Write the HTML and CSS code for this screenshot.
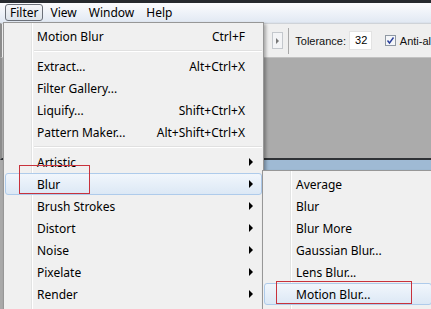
FILE: index.html
```html
<!DOCTYPE html>
<html lang="en">
<head>
  <meta charset="UTF-8">
  <meta name="viewport" content="width=device-width, initial-scale=1.0">
  <title>Filter menu</title>
  <link rel="stylesheet" href="styles.css">
</head>
<body>
  <div class="app">
    <div class="topline"></div>
    <nav class="menubar">
      <span class="menubar-item active">Filter</span>
      <span class="menubar-item">View</span>
      <span class="menubar-item">Window</span>
      <span class="menubar-item">Help</span>
    </nav>
    <div class="options">
      <span class="tb-btn"><span class="tb-arrow"></span></span>
      <span class="tb-sep"></span>
      <span class="tb-label">Tolerance:</span>
      <span class="tb-input">32</span>
      <span class="tb-check">
        <svg width="11" height="11" viewBox="0 0 11 11"><rect x="0.5" y="0.5" width="10" height="10" fill="#f4f6f9" stroke="#8f98a3"/><path d="M2.5 5.5 L4.5 8 L8.5 2.5" fill="none" stroke="#2a3f9a" stroke-width="1.4"/></svg>
      </span>
      <span class="tb-label">Anti-al</span>
    </div>
    <div class="canvas"></div>
    <div class="doc"></div>
  </div>

  <div class="menu main-menu">
    <div class="menu-item"><span>Motion Blur</span><span class="shortcut">Ctrl+F</span></div>
    <div class="menu-sep"></div>
    <div class="menu-item"><span>Extract...</span><span class="shortcut">Alt+Ctrl+X</span></div>
    <div class="menu-item"><span>Filter Gallery...</span></div>
    <div class="menu-item"><span>Liquify...</span><span class="shortcut">Shift+Ctrl+X</span></div>
    <div class="menu-item"><span>Pattern Maker...</span><span class="shortcut">Alt+Shift+Ctrl+X</span></div>
    <div class="menu-sep"></div>
    <div class="menu-item"><span>Artistic</span><span class="arrow"></span></div>
    <div class="menu-item hover"><span>Blur</span><span class="arrow"></span></div>
    <div class="menu-item"><span>Brush Strokes</span><span class="arrow"></span></div>
    <div class="menu-item"><span>Distort</span><span class="arrow"></span></div>
    <div class="menu-item"><span>Noise</span><span class="arrow"></span></div>
    <div class="menu-item"><span>Pixelate</span><span class="arrow"></span></div>
    <div class="menu-item"><span>Render</span><span class="arrow"></span></div>
  </div>

  <div class="menu sub-menu">
    <div class="menu-item"><span>Average</span></div>
    <div class="menu-item"><span>Blur</span></div>
    <div class="menu-item"><span>Blur More</span></div>
    <div class="menu-item"><span>Gaussian Blur...</span></div>
    <div class="menu-item"><span>Lens Blur...</span></div>
    <div class="menu-item hover"><span>Motion Blur...</span></div>
  </div>

  <div class="mark mark-blur"></div>
  <div class="mark mark-motion"></div>
</body>
</html>
```

FILE: styles.css
```css
body{
  margin: 0;
  width: 431px;
  height: 309px;
  overflow: hidden;
  position: relative;
  font-family: "Noto Sans", "Open Sans", sans-serif;
  font-size: 12px;
  color: #000;
}

.app{
  display: flex;
  flex-direction: column;
  height: 309px;
  background: #a9a9a9;
}

.topline{
  height: 3px;
  background: #262a2f;
}

.menubar{
  height: 19px;
  display: flex;
  align-items: center;
  gap: 2px;
  padding-left: 5px;
  background: linear-gradient(#fbfcfe, #e2e9f3);
  border-bottom: 1px solid #dbe2ec;
}

.menubar-item{
  height: 15px;
  line-height: 15px;
  padding: 0 4px;
  border: 1px solid transparent;
  border-radius: 3px;
}

.menubar-item.active{
  border-color: #6b7079;
  background: linear-gradient(#f4f6f9, #dde3ea);
}

.options{
  height: 33px;
  display: flex;
  align-items: center;
  padding-left: 270px;
  background: #efefef;
  border-top: 1px solid #cfd3d8;
  border-bottom: 1px solid #c2c2c2;
  border-left: 2px solid #8c8c8c;
  font-family: "Liberation Sans", Arial, sans-serif;
  font-size: 11px;
  white-space: nowrap;
  overflow: hidden;
}

.tb-btn{
  width: 12px;
  height: 15px;
  border: 1px solid #c4c8cd;
  background: #f3f4f6;
  display: flex;
  align-items: center;
  justify-content: center;
}

.tb-arrow{
  border-left: 3px solid #777;
  border-top: 3px solid transparent;
  border-bottom: 3px solid transparent;
}

.tb-sep{
  width: 1px;
  height: 26px;
  margin: 0 6px 0 5px;
  background: #a8a8a8;
}

.tb-label{
  color: #111;
}

.tb-input{
  width: 20px;
  height: 17px;
  line-height: 17px;
  margin: 0 13px 0 3px;
  padding-left: 5px;
  background: #fff;
  border: 1px solid #e3e3e3;
}

.tb-check{
  display: flex;
  margin-right: 4px;
}

.canvas{
  height: 100px;
  background: #ababab;
  border-left: 2px solid #8c8c8c;
  border-bottom: 2px solid #2f3236;
}

.doc{
  flex: 1;
  margin-left: 20px;
  background: #9fbad4;
}

.menu{
  position: absolute;
  box-sizing: border-box;
  padding: 2px 1px;
  background: #f0f0f0;
  border: 1px solid #979797;
  box-shadow: 2px 2px 3px rgba(0,0,0,.3);
}

.menu::before{
  content: "";
  position: absolute;
  top: 0;
  bottom: 0;
  left: 27px;
  width: 1px;
  background: #e2e3e3;
  border-right: 1px solid #fff;
}

.main-menu{
  left: 3px;
  top: 22px;
  width: 261px;
  height: 300px;
}

.sub-menu{
  left: 262px;
  top: 170px;
  width: 172px;
  height: 150px;
}

.menu-item{
  position: relative;
  height: 20px;
  display: flex;
  align-items: center;
  padding: 0 7px 0 31px;
  border: 1px solid transparent;
  border-radius: 3px;
}

.menu-item.hover{
  border-color: #aecbeb;
  background: linear-gradient(#f1f6fc, #dce8f5);
}

.shortcut{
  margin-left: auto;
  margin-right: 9px;
}

.arrow{
  margin-left: auto;
  margin-right: 1px;
  border-left: 4px solid #000;
  border-top: 4px solid transparent;
  border-bottom: 4px solid transparent;
}

.menu-sep{
  position: relative;
  height: 1px;
  margin: 3px 0 3px 29px;
  border-top: 1px solid #e0e0e0;
  background: #fff;
}

.mark{
  position: absolute;
  border: 1px solid #c8323c;
}

.mark-blur{
  left: 19px;
  top: 165px;
  width: 69px;
  height: 27px;
}

.mark-motion{
  left: 276px;
  top: 281px;
  width: 134px;
  height: 21px;
}
```
